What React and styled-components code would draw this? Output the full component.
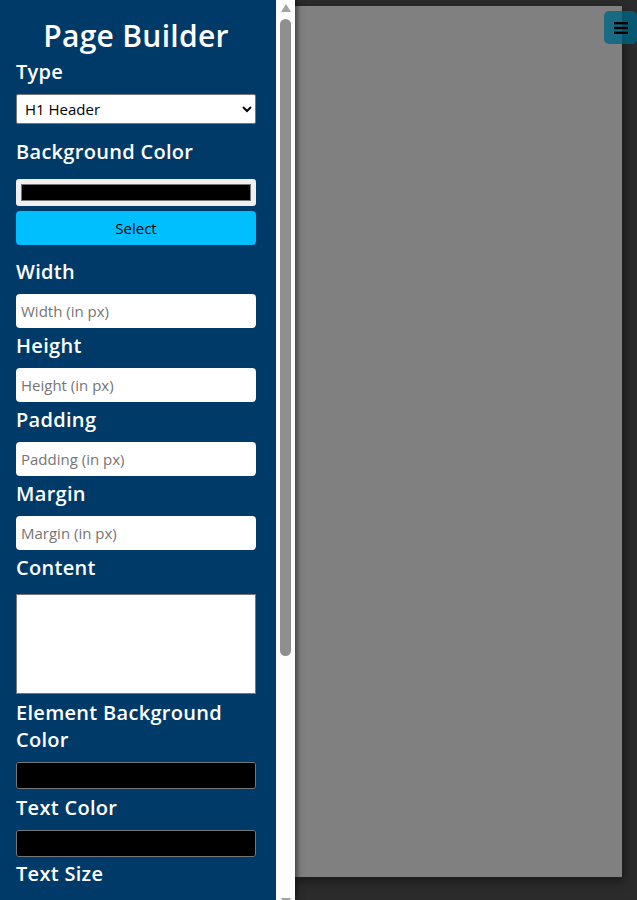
import styled, { createGlobalStyle } from "styled-components";

const GlobalStyle = createGlobalStyle`
    html, body {
        margin: 0;
        height: 100%;
        font-family: "Open Sans", "Liberation Sans", sans-serif;
    }
    * {
        box-sizing: border-box;
    }
`

const Layout = styled.div`
    display: flex;
    height: 100vh;
    overflow: hidden;
    background: #2b2b2b;
`

const SidePanel = styled.div`
    flex: 0 0 295px;
    display: flex;
    height: 100%;
    position: relative;
    z-index: 1;
    box-shadow: 2px 0 6px rgba(0, 0, 0, 0.55);
`

const Sidebar = styled.aside`
    flex: 0 0 276px;
    height: 100%;
    overflow: hidden;
    background: #003a68;
    padding: 0 0 40px 16px;
    color: #fff;
`

// fake scrollbar, headless hides the real one
const ScrollTrack = styled.div`
    flex: 1;
    display: flex;
    flex-direction: column;
    align-items: center;
    background: #fdfdfd;
    overflow: hidden;
`

const ArrowBox = styled.div`
    flex: 0 0 15px;
    display: flex;
    align-items: ${p => (p.$down ? "flex-start" : "center")};
    justify-content: center;
    margin-bottom: ${p => (p.$down ? "-13px" : "0")};
    &::before {
        content: "";
        width: 0;
        height: 0;
        border-left: 5px solid transparent;
        border-right: 5px solid transparent;
        ${p => (p.$down ? "border-top" : "border-bottom")}: 8px solid #a3a3a3;
    }
`

const Thumb = styled.div`
    width: 11px;
    height: 637px;
    margin-top: 4px;
    border-radius: 6px;
    background: #8f8f8f;
`

const Spacer = styled.div`
    flex: 1;
`

const Title = styled.h1`
    margin: 0;
    padding: 14px 0 0;
    width: 240px;
    text-align: center;
    font-size: 30px;
    line-height: 44px;
    font-weight: 600;
    letter-spacing: 0.3px;
`

const Label = styled.label`
    display: block;
    width: 240px;
    margin: ${p => p.$top ?? 4}px 0 ${p => p.$bottom ?? 9}px;
    font-size: 20px;
    line-height: 27px;
    font-weight: 600;
    letter-spacing: 0.3px;
`

const Select = styled.select`
    display: block;
    width: 240px;
    height: 30px;
    padding: 0 4px;
    border: 1px solid #767676;
    border-radius: 2px;
    background: #fff;
    font-family: inherit;
    font-size: 15px;
    color: #000;
    margin-bottom: 14px;
`

const TextInput = styled.input`
    display: block;
    width: 240px;
    height: 34px;
    padding: 0 5px;
    border: none;
    border-radius: 4px;
    background: #fff;
    font-family: inherit;
    font-size: 15px;
    color: #000;
    &::placeholder {
        color: #757575;
    }
`

const TextArea = styled.textarea`
    display: block;
    width: 240px;
    height: 100px;
    border: 1px solid #767676;
    border-radius: 0;
    resize: none;
    font-family: inherit;
    margin-top: 13px;
`

const ColorPicker = styled.input`
    display: block;
    width: 240px;
    height: 27px;
    padding: ${p => (p.$plain ? "0" : "5px")};
    border: ${p => (p.$plain ? "1px solid #767676" : "none")};
    border-radius: 3px;
    background: ${p => (p.$plain ? "#000" : "#efefef")};
    cursor: pointer;
    &::-webkit-color-swatch-wrapper {
        padding: 0;
    }
    &::-webkit-color-swatch {
        border: ${p => (p.$plain ? "none" : "1px solid #767676")};
        border-radius: 0;
    }
`

const SelectButton = styled.button`
    display: block;
    width: 240px;
    height: 34px;
    margin-top: 5px;
    border: none;
    border-radius: 4px;
    background: #00bfff;
    font-family: inherit;
    font-size: 15px;
    color: #000;
    margin-bottom: 13px;
`

const Main = styled.main`
    flex: 1;
    display: flex;
    padding: 6px 15px 23px 0;
`

const Canvas = styled.div`
    flex: 1;
    background: #808080;
    box-shadow: 2px 4px 10px rgba(0, 0, 0, 0.45);
`

const MenuButton = styled.button`
    position: fixed;
    top: 11px;
    right: 0;
    width: 33px;
    height: 33px;
    border: none;
    border-radius: 5px;
    background: rgba(0, 100, 133, 0.8);
    padding: 0;
    display: flex;
    align-items: center;
    justify-content: center;
`

const MenuIcon = () => (
    <svg width="14" height="12" viewBox="0 0 14 12">
        <rect x="0" y="0" width="14" height="2.4" fill="#000" />
        <rect x="0" y="4.8" width="14" height="2.4" fill="#000" />
        <rect x="0" y="9.6" width="14" height="2.4" fill="#000" />
    </svg>
)

const textFields = [
    { label: "Width", placeholder: "Width (in px)" },
    { label: "Height", placeholder: "Height (in px)" },
    { label: "Padding", placeholder: "Padding (in px)" },
    { label: "Margin", placeholder: "Margin (in px)" },
]

const App = () => (
    <Layout>
        <GlobalStyle />
        <SidePanel>
            <Sidebar>
                <Title>Page Builder</Title>
                <Label $top={0}>Type</Label>
                <Select defaultValue="h1">
                    <option value="h1">H1 Header</option>
                    <option value="h2">H2 Header</option>
                    <option value="p">Paragraph</option>
                    <option value="div">Div</option>
                    <option value="img">Image</option>
                </Select>
                <Label $top={0} $bottom={14}>Background Color</Label>
                <ColorPicker type="color" defaultValue="#000000" />
                <SelectButton>Select</SelectButton>
                {textFields.map(field => (
                    <div key={field.label}>
                        <Label>{field.label}</Label>
                        <TextInput type="text" placeholder={field.placeholder} />
                    </div>
                ))}
                <Label>Content</Label>
                <TextArea />
                <Label $top={5}>Element Background Color</Label>
                <ColorPicker $plain type="color" defaultValue="#000000" />
                <Label $top={5}>Text Color</Label>
                <ColorPicker $plain type="color" defaultValue="#000000" />
                <Label $top={3}>Text Size</Label>
            </Sidebar>
            <ScrollTrack>
                <ArrowBox />
                <Thumb />
                <Spacer />
                <ArrowBox $down />
            </ScrollTrack>
        </SidePanel>
        <Main>
            <Canvas />
        </Main>
        <MenuButton>
            <MenuIcon />
        </MenuButton>
    </Layout>
)

export default App
